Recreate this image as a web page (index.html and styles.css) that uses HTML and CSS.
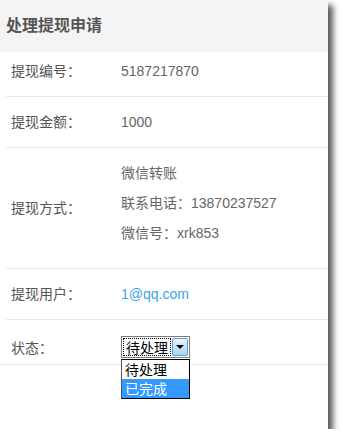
FILE: index.html
```html
<!DOCTYPE html>
<html lang="zh-CN">
<head>
<meta charset="utf-8">
<title>处理提现申请</title>
<link rel="stylesheet" href="styles.css">
</head>
<body>
<div class="card">
  <div class="head"><h1 class="title">处理提现申请</h1></div>
  <div class="rows">
    <div class="row row-first">
      <div class="label">提现编号<span class="colon">：</span></div>
      <div class="value">5187217870</div>
    </div>
    <div class="row">
      <div class="label">提现金额<span class="colon">：</span></div>
      <div class="value">1000</div>
    </div>
    <div class="row row-multi">
      <div class="label">提现方式<span class="colon">：</span></div>
      <div class="value value-multi">
        <div class="line">微信转账</div>
        <div class="line">联系电话<span class="colon">：</span>13870237527</div>
        <div class="line">微信号<span class="colon">：</span>xrk853</div>
      </div>
    </div>
    <div class="row">
      <div class="label">提现用户<span class="colon">：</span></div>
      <div class="value"><a class="link" href="#">1@qq.com</a></div>
    </div>
    <div class="row row-status">
      <div class="label">状态<span class="colon">：</span></div>
      <div class="value">
        <div class="select">
          <div class="select-box">
            <span class="select-text">待处理</span>
            <span class="select-btn"><span class="arrow"></span></span>
          </div>
          <ul class="options">
            <li class="option">待处理</li>
            <li class="option option-active">已完成</li>
          </ul>
        </div>
      </div>
    </div>
  </div>
</div>
</body>
</html>
```

FILE: styles.css
```css
html, body {
  margin: 0;
  padding: 0;
  background: #ffffff;
}

body {
  font-family: "Liberation Sans", "Noto Sans CJK SC", sans-serif;
  font-size: 14px;
  color: #666;
}

.card {
  width: 328px;
  height: 429px;
  background: #fff;
  box-shadow: 5px 5px 6px rgba(0, 0, 0, 0.65);
}

.head {
  height: 52px;
  background: #f4f4f4;
  display: flex;
  align-items: center;
  padding-left: 6px;
}

.title {
  margin: 0;
  font-family: "Noto Sans CJK SC", sans-serif;
  font-size: 16px;
  font-weight: bold;
  color: #555;
  line-height: 20px;
  position: relative;
  top: -2px;
}

.rows {
  display: flex;
  flex-direction: column;
}

.row {
  display: flex;
  align-items: center;
  margin-left: 6px;
  padding: 15px 0;
  border-bottom: 1px solid #e8e8e8;
  line-height: 20px;
}

.row-first {
  padding-top: 9px;
}

.row-multi {
  padding: 0;
}

.label {
  width: 115px;
  box-sizing: border-box;
  padding-left: 5px;
  color: #555;
  flex-shrink: 0;
}

.colon {
  font-family: "Noto Sans CJK TC", sans-serif;
  line-height: 0;
}

.value {
  color: #666;
}

.value-multi {
  padding: 10px 0 20px;
}

.line {
  line-height: 30px;
}

.link {
  color: #3aa3e6;
  text-decoration: none;
}

.row-status {
  margin-left: 0;
  padding: 15px 0 6px 6px;
}

.row-status .label {
  padding-top: 3px;
}

.select {
  position: relative;
  width: 69px;
  height: 22px;
  font-family: "Noto Sans CJK SC", sans-serif;
  color: #000;
}

.select-box {
  box-sizing: border-box;
  width: 69px;
  height: 22px;
  border: 1px solid #7a7a7a;
  display: flex;
  align-items: stretch;
  padding: 1px;
  background: #fff;
}

.select-text {
  flex: 1;
  outline: 1px dotted #000;
  outline-offset: -1px;
  line-height: 18px;
  padding-left: 3px;
  margin-right: 1px;
}

.select-btn {
  width: 16px;
  box-sizing: border-box;
  border: 1px solid #5f9bd1;
  border-radius: 2px;
  background: linear-gradient(#eef7fd, #c2e3f8 50%, #a8d6f5);
  display: flex;
  align-items: center;
  justify-content: center;
}

.arrow {
  width: 0;
  height: 0;
  border-left: 4px solid transparent;
  border-right: 4px solid transparent;
  border-top: 4px solid #000;
}

.options {
  position: absolute;
  top: 23px;
  left: 0;
  width: 69px;
  box-sizing: border-box;
  margin: 0;
  padding: 0;
  list-style: none;
  border: 1px solid #000;
  border-left-color: #555;
  background: #fff;
}

.option {
  height: 19px;
  line-height: 19px;
  padding-left: 3px;
  color: #000;
}

.option-active {
  background: #3399ff;
  color: #fff;
}
```
